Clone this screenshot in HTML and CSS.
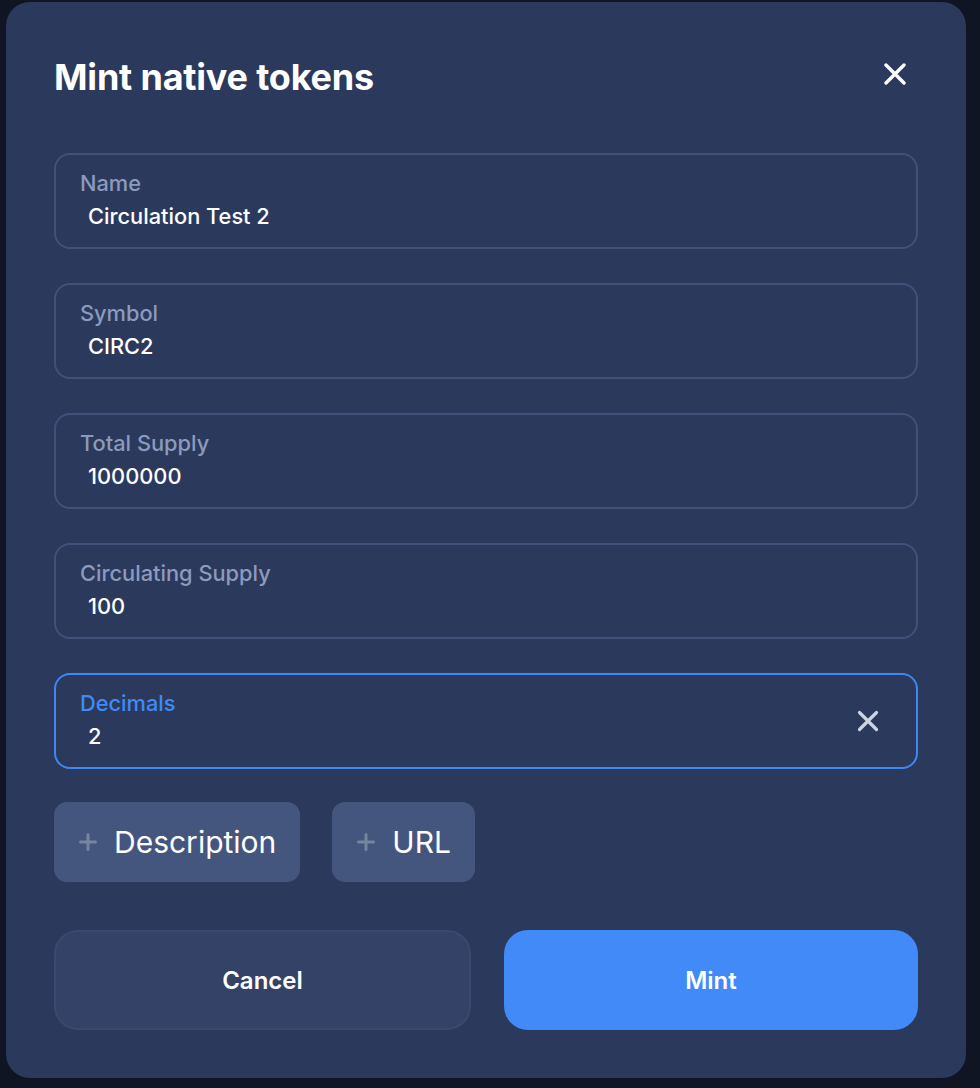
FILE: index.html
```html
<!DOCTYPE html>
<html lang="en">
<head>
<meta charset="utf-8">
<title>Mint native tokens</title>
<link rel="stylesheet" href="styles.css">
</head>
<body>
<div class="backdrop">
  <div class="modal">
    <div class="modal-header">
      <h1 class="modal-title">Mint native tokens</h1>
      <button class="close-btn" aria-label="Close">
        <svg width="22" height="22" viewBox="0 0 22 22"><path d="M2 2L20 20M20 2L2 20" stroke="#ffffff" stroke-width="3.4" stroke-linecap="round"/></svg>
      </button>
    </div>
    <div class="fields">
      <div class="field">
        <div class="field-body">
          <span class="field-label">Name</span>
          <span class="field-value">Circulation Test 2</span>
        </div>
      </div>
      <div class="field">
        <div class="field-body">
          <span class="field-label">Symbol</span>
          <span class="field-value">CIRC2</span>
        </div>
      </div>
      <div class="field">
        <div class="field-body">
          <span class="field-label">Total Supply</span>
          <span class="field-value">1000000</span>
        </div>
      </div>
      <div class="field">
        <div class="field-body">
          <span class="field-label">Circulating Supply</span>
          <span class="field-value">100</span>
        </div>
      </div>
      <div class="field field-focused">
        <div class="field-body">
          <span class="field-label">Decimals</span>
          <span class="field-value">2</span>
        </div>
        <svg class="clear-icon" width="22" height="22" viewBox="0 0 22 22"><path d="M2.5 2.5L19.5 19.5M19.5 2.5L2.5 19.5" stroke="#cdd5e3" stroke-width="3.2" stroke-linecap="round"/></svg>
      </div>
    </div>
    <div class="add-row">
      <button class="add-btn">
        <svg class="plus" width="20" height="20" viewBox="0 0 20 20"><path d="M10 2.5V17.5M2.5 10H17.5" stroke="#76869f" stroke-width="3" stroke-linecap="round"/></svg>
        <span>Description</span>
      </button>
      <button class="add-btn">
        <svg class="plus" width="20" height="20" viewBox="0 0 20 20"><path d="M10 2.5V17.5M2.5 10H17.5" stroke="#76869f" stroke-width="3" stroke-linecap="round"/></svg>
        <span>URL</span>
      </button>
    </div>
    <div class="actions">
      <button class="action-btn cancel">Cancel</button>
      <button class="action-btn mint">Mint</button>
    </div>
  </div>
</div>
</body>
</html>
```
FILE: styles.css
```css
* { box-sizing: border-box; }
html, body {
  margin: 0;
  padding: 0;
  background: #0f1522;
  font-family: Inter, "Noto Sans", sans-serif;
}
.backdrop {
  width: 980px;
  height: 1088px;
  padding: 2px 0 0 6px;
  background: #0f1522;
}
.modal {
  width: 960px;
  background: #2b395d;
  border-radius: 24px;
  padding: 53px 48px 48px;
  display: flex;
  flex-direction: column;
}
.modal-header {
  display: flex;
  justify-content: space-between;
  align-items: flex-start;
  height: 44px;
}
.modal-title {
  margin: 0;
  font-size: 36px;
  line-height: 44px;
  font-weight: 700;
  color: #ffffff;
  letter-spacing: -0.2px;
}
.close-btn {
  margin: 8px 12px 0 0;
  padding: 0;
  border: 0;
  background: transparent;
  width: 22px;
  height: 22px;
  display: flex;
}
.fields {
  margin-top: 54px;
  display: flex;
  flex-direction: column;
  gap: 34px;
}
.field {
  height: 96px;
  border: 2px solid #40517a;
  border-radius: 16px;
  padding: 16px 37px 0 24px;
  display: flex;
  align-items: flex-start;
}
.field-body {
  flex: 1;
  display: flex;
  flex-direction: column;
  gap: 9px;
}
.field-label {
  font-size: 21.8px;
  line-height: 24px;
  font-weight: 500;
  color: #8c9bbd;
}
.field-value {
  font-size: 21.8px;
  line-height: 24px;
  font-weight: 500;
  color: #ffffff;
  padding-left: 8px;
}
.field-focused {
  border-color: #3f87f2;
}
.field-focused .field-label {
  color: #3f8bf5;
}
.clear-icon {
  align-self: center;
  margin-top: -16px;
}
.add-row {
  margin-top: 33px;
  display: flex;
  gap: 32px;
}
.add-btn {
  height: 80px;
  border: 0;
  border-radius: 13px;
  background: #44557e;
  padding: 0 24px 0 24px;
  display: flex;
  align-items: center;
  gap: 16px;
  font-family: Inter, "Noto Sans", sans-serif;
  font-size: 30px;
  font-weight: 400;
  color: #ffffff;
}
.plus { flex: none; }
.actions {
  margin-top: 48px;
  display: flex;
  gap: 33px;
}
.action-btn {
  height: 100px;
  border-radius: 24px;
  font-family: Inter, "Noto Sans", sans-serif;
  font-size: 24px;
  font-weight: 600;
  color: #ffffff;
}
.cancel {
  width: 417px;
  background: #334266;
  border: 2px solid #3a496e;
}
.mint {
  flex: 1;
  background: #418af7;
  border: 0;
}
```
